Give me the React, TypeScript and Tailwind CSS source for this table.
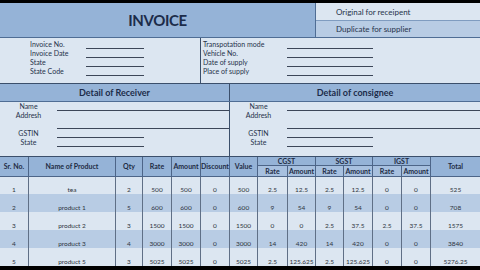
import React from "react";

const rows = [
  ["1", "tea", "2", "500", "500", "0", "500", "2.5", "12.5", "2.5", "12.5", "0", "0", "525"],
  ["2", "product 1", "5", "600", "600", "0", "600", "9", "54", "9", "54", "0", "0", "708"],
  ["3", "product 2", "3", "1500", "1500", "0", "1500", "0", "0", "2.5", "37.5", "2.5", "37.5", "1575"],
  ["4", "product 3", "4", "3000", "3000", "0", "3000", "14", "420", "14", "420", "0", "0", "3840"],
  ["5", "product 5", "3", "5025", "5025", "0", "5025", "2.5", "125.625", "2.5", "125.625", "0", "0", "5276.25"],
];

function InfoBlock({ labels, pad, lineW }: { labels: string[]; pad: string; lineW: string }) {
  return (
    <div className={`grid ${lineW} auto-rows-[9px] pt-[1.5px]`}>
      {labels.map((l) => (
        <React.Fragment key={l}>
          <div className={`${pad} flex items-center text-[7px] leading-none text-[#26324a]`}>{l}</div>
          <div className="border-b border-[#3c4658]" />
        </React.Fragment>
      ))}
    </div>
  );
}

function Party({ longLine, shortLine }: { longLine: string; shortLine: string }) {
  const label = "flex items-center justify-center text-[7px] leading-none text-[#26324a]";
  return (
    <div className="grid grid-cols-[57px_1fr] auto-rows-[9px]">
      <div className={label}>Name</div>
      <div className={`border-b border-[#3c4658] ${longLine}`} />
      <div className={label}>Addresh</div>
      <div className={`row-span-2 border-b border-[#3c4658] ${longLine}`} />
      <div />
      <div className={label}>GSTIN</div>
      <div className={`border-b border-[#3c4658] ${shortLine}`} />
      <div className={label}>State</div>
      <div className={`border-b border-[#3c4658] ${shortLine}`} />
    </div>
  );
}

export default function App() {
  const th = "flex items-center justify-center bg-[#95b3d7] border-r border-b border-[#4d6588] text-[7px] font-bold leading-none text-[#1e2c44]";
  return (
    <div className="w-[480px] h-[270px] overflow-hidden bg-black pt-[3px] font-['Lato','Open_Sans',sans-serif]">
      <div className="bg-[#dce6f1]">
        {/* title */}
        <div className="flex h-[35px] border-b border-[#4f6d94]">
          <div className="flex w-[316px] items-center justify-center bg-[#95b3d7] border-r border-[#4f6d94]">
            <span className="text-[15px] font-bold tracking-tight text-[#1c2c4a]">INVOICE</span>
          </div>
          <div className="flex flex-1 flex-col">
            <div className="flex h-[18px] items-center border-b border-[#7f9cc0] bg-[#dce6f1] pl-[20px] text-[8px] text-[#26324a]">
              Original for receipent
            </div>
            <div className="flex flex-1 items-center bg-[#b8cce4] pl-[20px] text-[8px] text-[#26324a]">
              Duplicate for supplier
            </div>
          </div>
        </div>

        {/* invoice info */}
        <div className="flex h-[46px] border-b border-[#3b4f6b]">
          <div className="w-[201px] border-r border-[#3b4f6b]">
            <InfoBlock labels={["Invoice No.", "Invoice Date", "State", "State Code"]} pad="pl-[30px]" lineW="grid-cols-[86px_58px]" />
          </div>
          <div className="flex-1">
            <InfoBlock
              labels={["Transpotation mode", "Vehicle No.", "Date of supply", "Place of supply"]}
              pad="pl-[2px]"
              lineW="grid-cols-[86px_86px]"
            />
          </div>
        </div>

        {/* party bands */}
        <div className="flex h-[18px] border-b border-[#4f6d94] bg-[#95b3d7] text-[9px] font-bold text-[#1c2c4a]">
          <div className="flex w-[230px] items-center justify-center border-r border-[#3b4f6b]">Detail of Receiver</div>
          <div className="flex flex-1 items-center justify-center">Detail of consignee</div>
        </div>
        <div className="flex h-[54px]">
          <div className="w-[230px] border-r border-[#3b4f6b]">
            <Party longLine="" shortLine="w-[87px]" />
          </div>
          <div className="flex-1">
            <Party longLine="" shortLine="w-[86px]" />
          </div>
        </div>

        {/* table */}
        <div className="grid grid-cols-[29px_87px_27px_29px_29px_29px_28px_30px_28px_28px_29px_29px_29px_1fr] grid-rows-[9px_11px_17px_18px_18px_18px_18px] border-t border-[#3b4f6b]">
          <div className={`${th} row-span-2`}>Sr. No.</div>
          <div className={`${th} row-span-2`}>Name of Product</div>
          <div className={`${th} row-span-2`}>Qty</div>
          <div className={`${th} row-span-2`}>Rate</div>
          <div className={`${th} row-span-2`}>Amount</div>
          <div className={`${th} row-span-2`}>Discount</div>
          <div className={`${th} row-span-2`}>Value</div>
          <div className={`${th} col-span-2`}>CGST</div>
          <div className={`${th} col-span-2`}>SGST</div>
          <div className={`${th} col-span-2`}>IGST</div>
          <div className={`${th} row-span-2 border-r-0`}>Total</div>
          {["Rate", "Amount", "Rate", "Amount", "Rate", "Amount"].map((t, i) => (
            <div key={i} className={`${th} bg-[#a7c0df]`}>{t}</div>
          ))}
          {rows.map((r, ri) =>
            r.map((c, ci) => (
              <div
                key={`${ri}-${ci}`}
                className={`flex items-end justify-center pb-[0.5px] text-[6.5px] leading-[8px] text-[#2e3440] ${
                  ci < 13 ? "border-r border-[#5f6f86]" : ""
                } ${ri % 2 === 1 ? "bg-[#b8cce4]" : "bg-[#dce6f1]"}`}
              >
                {c}
              </div>
            ))
          )}
        </div>
      </div>
    </div>
  );
}
